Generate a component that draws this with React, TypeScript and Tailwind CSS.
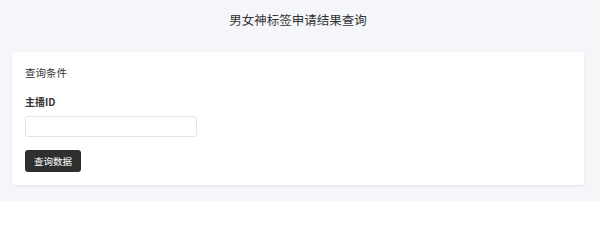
export default function App() {
  return (
    <div
      className="min-h-[201px] bg-[#f5f6f9] pl-[12px] pr-[16px] pt-[11px] text-[#333]"
      style={{ fontFamily: '"Noto Sans CJK SC", "Noto Sans", sans-serif' }}
    >
      <h1 className="text-center text-[12.5px] leading-[17px] font-normal">男女神标签申请结果查询</h1>
      <div className="mt-[24px] rounded-[3px] bg-white px-[13px] pt-[12px] pb-[13px] shadow-[0_1px_3px_rgba(0,0,0,0.08)]">
        <div className="text-[10.5px] leading-[18px]">查询条件</div>
        <div className="mt-[13px] text-[10px] font-bold leading-[14px]">主播ID</div>
        <input
          type="text"
          className="mt-[7px] block h-[21px] w-[172px] rounded-[3px] border border-[#e3e3e3] bg-white outline-none"
        />
        <button className="mt-[13px] block h-[22px] rounded-[3px] bg-[#2f2f2f] px-[9px] text-[9.5px] text-white">
          查询数据
        </button>
      </div>
    </div>
  );
}
